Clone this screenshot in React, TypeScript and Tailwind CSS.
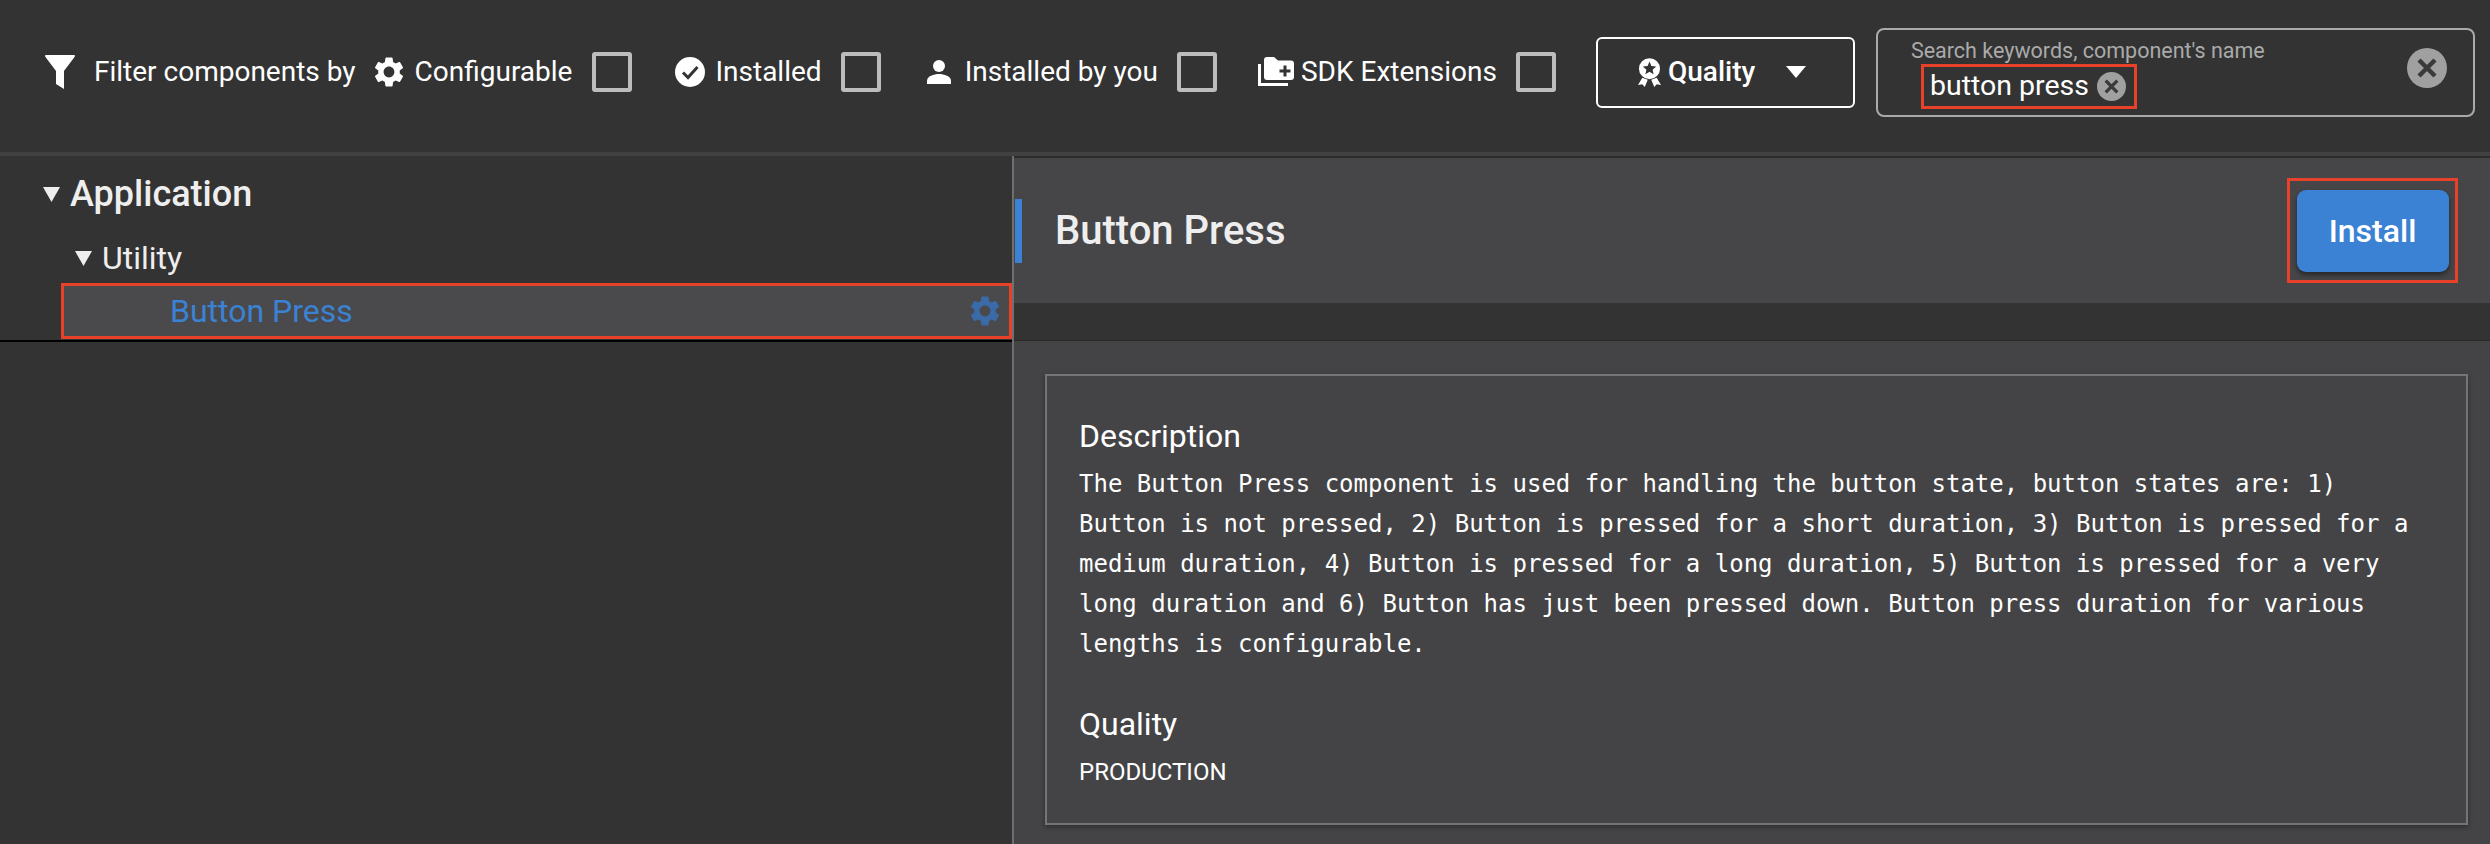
const Gear = ({ className }: { className: string }) => (
  <svg viewBox="2.5 2 19 20" className={className} fill="currentColor">
    <path d="M19.14 12.94c.04-.3.06-.61.06-.94 0-.32-.02-.64-.07-.94l2.03-1.58c.18-.14.23-.41.12-.61l-1.92-3.32c-.12-.22-.37-.29-.59-.22l-2.39.96c-.5-.38-1.03-.7-1.62-.94l-.36-2.54c-.04-.24-.24-.41-.48-.41h-3.84c-.24 0-.43.17-.47.41l-.36 2.54c-.59.24-1.13.57-1.62.94l-2.39-.96c-.22-.08-.47 0-.59.22L2.74 8.87c-.12.21-.08.47.12.61l2.03 1.58c-.05.3-.09.63-.09.94s.02.64.07.94l-2.03 1.58c-.18.14-.23.41-.12.61l1.92 3.32c.12.22.37.29.59.22l2.39-.96c.5.38 1.03.7 1.62.94l.36 2.54c.05.24.24.41.48.41h3.84c.24 0 .44-.17.47-.41l.36-2.54c.59-.24 1.13-.56 1.62-.94l2.39.96c.22.08.47 0 .59-.22l1.92-3.32c.12-.22.07-.47-.12-.61l-2.01-1.58zM12 15.6c-1.98 0-3.6-1.62-3.6-3.6s1.62-3.6 3.6-3.6 3.6 1.62 3.6 3.6-1.62 3.6-3.6 3.6z" />
  </svg>
);

const Check = ({ className }: { className: string }) => (
  <div className={`h-10 w-10 shrink-0 rounded-[3px] border-4 border-[#bdbdbd] ${className}`} />
);

const Triangle = ({ className }: { className: string }) => (
  <svg viewBox="0 0 17 15" className={className} fill="currentColor" preserveAspectRatio="none">
    <path d="M0 0h17L8.5 15z" />
  </svg>
);

const CloseDot = ({ className }: { className: string }) => (
  <svg viewBox="0 0 40 40" className={className}>
    <circle cx="20" cy="20" r="20" fill="#a0a0a0" />
    <path d="M12 12l16 16M28 12L12 28" stroke="#3a3a3a" strokeWidth="4.5" fill="none" />
  </svg>
);

export default function App() {
  return (
    <div className="flex h-[844px] w-[2490px] flex-col overflow-hidden bg-[#333333] font-['Roboto',sans-serif] text-[28px] text-white">
      {/* filter bar */}
      <div className="flex h-[152px] shrink-0 items-center pb-[8px] pl-[45px]">
        <svg viewBox="0 0 30 34" className="h-[34px] w-[30px] shrink-0" fill="#fff">
          <path d="M1 0h28c1 0 1.300 1 .7 1.800L19 16v18l-8-5V16L.300 1.800C-.3 1 0 0 1 0z" />
        </svg>
        <span className="ml-[19px]">Filter components by</span>
        <Gear className="ml-[18px] h-[30px] w-[30px] shrink-0" />
        <span className="ml-[11px]">Configurable</span>
        <Check className="ml-[20px]" />

        <svg viewBox="0 0 30 30" className="ml-[43px] h-[30px] w-[30px] shrink-0">
          <circle cx="15" cy="15" r="15" fill="#fff" />
          <path d="M8 15.500l5 5 9.500-10.500" stroke="#333" strokeWidth="3" fill="none" />
        </svg>
        <span className="ml-[10px]">Installed</span>
        <Check className="ml-[19px]" />

        <svg viewBox="0 0 24 24" className="ml-[46px] h-[24px] w-[24px] shrink-0" fill="#fff">
          <circle cx="12" cy="6" r="6" />
          <path d="M0 24v-3c0-5 7-7 12-7s12 2 12 7v3z" />
        </svg>
        <span className="ml-[14px]">Installed by you</span>
        <Check className="ml-[19px]" />

        <svg viewBox="0 0 36 30" className="ml-[41px] h-[30px] w-[36px] shrink-0">
          <path d="M1.500 7v20.500H30" stroke="#fff" strokeWidth="3" fill="none" />
          <path d="M6 3a3 3 0 0 1 3-3h7l4 3.500h13a3 3 0 0 1 3 3V20a3 3 0 0 1-3 3H9a3 3 0 0 1-3-3z" fill="#fff" />
          <path d="M27 8.500v11M21.500 14h11" stroke="#333" strokeWidth="3" fill="none" />
        </svg>
        <span className="ml-[7px]">SDK Extensions</span>
        <Check className="ml-[19px]" />

        <button className="ml-[40px] flex h-[71px] w-[259px] shrink-0 items-center rounded-[6px] border-2 border-white pl-[40px] font-medium">
          <svg viewBox="0 0 24 30" className="h-[29px] w-[23px] shrink-0" fill="#fff">
            <path
              fillRule="evenodd"
              d="M12 0a11 11 0 0 1 11 11 11 11 0 0 1-11 11A11 11 0 0 1 1 11 11 11 0 0 1 12 0zM12 3.500l-2 4.700-5 .5 3.800 3.300-1.100 4.900 4.300-2.600 4.300 2.600-1.100-4.900 3.800-3.300-5-.5z"
            />
            <path d="M4.500 20.500L0 28l4.500-.7L7 30l3.200-7.500zM19.500 20.500L24 28l-4.500-.7L17 30l-3.200-7.500z" />
          </svg>
          <span className="ml-[7px]">Quality</span>
          <Triangle className="ml-[31px] h-[12px] w-[20px] shrink-0" />
        </button>

        <div className="relative ml-[21px] h-[89px] w-[599px] shrink-0 rounded-[8px] border-2 border-[#aaaaaa] pl-[33px] pt-[5px]">
          <div className="text-[21.500px] leading-[32px] text-[#aaaaaa]">Search keywords, component's name</div>
          <div className="ml-[10px] mt-[-3px] flex h-[45px] w-[216px] items-center border-[3px] border-[#e8412a] pl-[6px] text-[28.500px]">
            <span>button press</span>
            <CloseDot className="ml-[8px] h-[29px] w-[29px] shrink-0" />
          </div>
          <CloseDot className="absolute right-[26px] top-[18px] h-[40px] w-[40px]" />
        </div>
      </div>
      <div className="h-1 shrink-0 bg-[#414141]" />

      <div className="flex min-h-0 flex-1">
        {/* component tree */}
        <div className="w-[1012px] shrink-0">
          <div className="flex h-[127px] flex-col">
            <div className="mt-[14px] flex h-[48px] items-center pl-[43px] text-[36px] font-medium text-[#eeeeee]">
              <Triangle className="h-[15px] w-[17px] shrink-0" />
              <span className="ml-[10px]">Application</span>
            </div>
            <div className="mt-[18px] flex h-[44px] items-center pl-[75px] text-[32px] text-[#eeeeee]">
              <Triangle className="h-[15px] w-[17px] shrink-0" />
              <span className="ml-[10px]">Utility</span>
            </div>
          </div>
          <div className="ml-[61px] flex h-[56px] items-center border-[3px] border-[#e8412a] bg-[#4a4a4c] pl-[106px] pr-[9px] text-[32px] text-[#3b82d4]">
            <span>Button Press</span>
            <Gear className="ml-auto h-[30px] w-[30px] text-[#3a6ba8]" />
          </div>
          <div className="mt-[1px] h-[2px] bg-black" />
        </div>

        {/* details */}
        <div className="flex min-w-0 flex-1 flex-col border-l-2 border-[#6f6f6f] bg-[#333333]">
          <div className="flex h-[147px] shrink-0 items-center border-t-2 border-[#2c2c2c] bg-[#464648]">
            <div className="ml-[1px] h-[64px] w-[7px] bg-[#3b82d4]" />
            <h1 className="ml-[33px] text-[40px] font-medium text-[#eeeeee]">Button Press</h1>
            <div className="ml-auto mr-[32px] flex h-[105px] w-[171px] items-center justify-center border-[3px] border-[#e8412a]">
              <button className="h-[82px] w-[152px] rounded-[9px] bg-[#3b82d4] text-[32px] font-medium shadow-[0_3px_5px_rgba(0,0,0,0.45)]">
                Install
              </button>
            </div>
          </div>
          <div className="h-[38px] shrink-0 border-b border-[#2b2b2b]" />
          <div className="flex-1 bg-[#444446] pl-[31px] pr-[22px] pt-[33px]">
            <div className="h-[451px] border-2 border-[#757575] px-[32px] pt-[40px] shadow-[0_2px_5px_rgba(0,0,0,0.35)]">
              <h2 className="text-[32px] leading-[40px]">Description</h2>
              <p className="mt-[8px] font-['DejaVu_Sans_Mono',monospace] text-[24px] leading-[40px]">
                The Button Press component is used for handling the button state, button states are: 1) Button is not pressed, 2) Button is pressed for a short duration, 3) Button is pressed for a medium duration, 4) Button is pressed for a long duration, 5) Button is pressed for a very long duration and 6) Button has just been pressed down. Button press duration for various lengths is configurable.
              </p>
              <h2 className="mt-[40px] text-[32px] leading-[40px]">Quality</h2>
              <div className="mt-[8px] text-[24px] leading-[40px]">PRODUCTION</div>
            </div>
          </div>
        </div>
      </div>
    </div>
  );
}
